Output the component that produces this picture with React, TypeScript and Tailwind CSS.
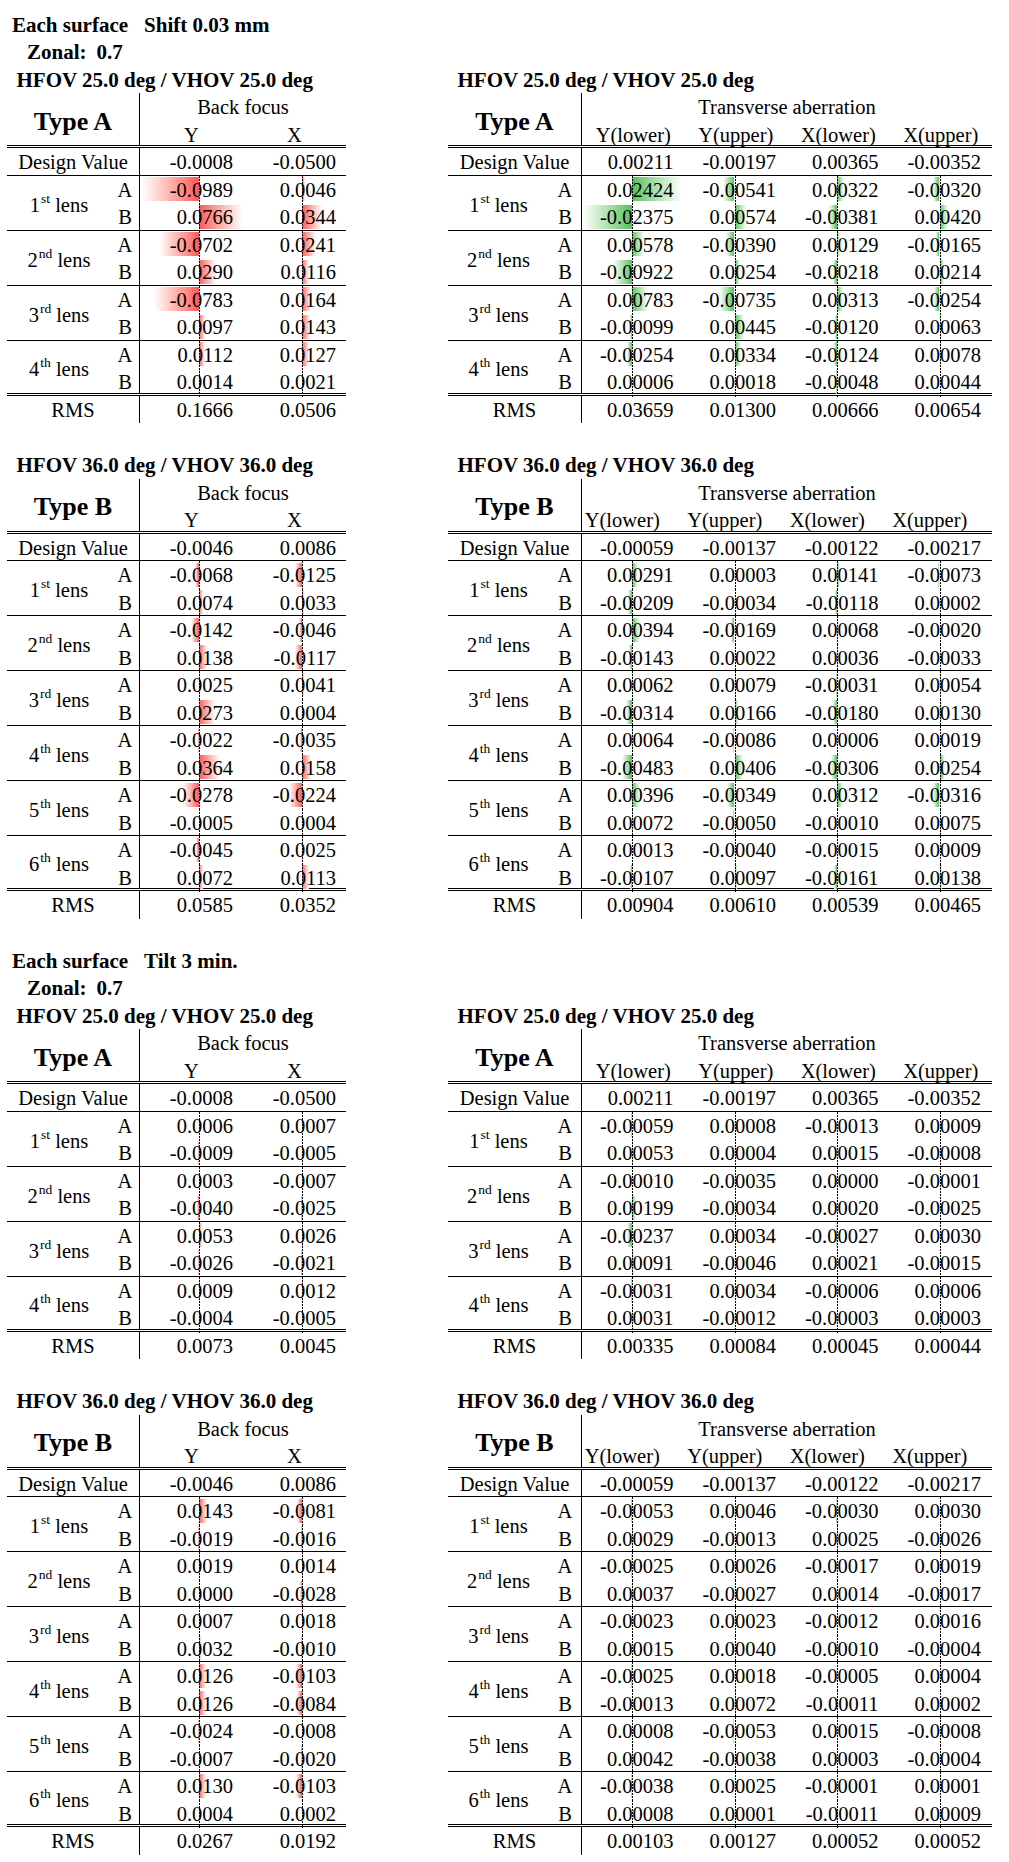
/**
 * Lens tolerance sheet — shift / tilt sensitivity tables.
 * Back focus (red data bars) on the left, transverse aberration (green) on the right.
 */
import React from "react";

type Kind = "bf" | "ta";

const ORD = ["st", "nd", "rd", "th", "th", "th"];

const KIND = {
  bf: {
    title: "Back focus",
    cols: ["Y", "X"],
    width: "w-[339px]",
    first: "w-[133px]",
    lens: "w-[104px]",
    ab: "w-[29px]",
    cell: "w-[103px]",
    axis: "left-[59px]",
    axisPx: 59,
    pad: "pr-[10px]",
    scale: 576,
    pos: "bg-linear-to-r from-[#ff555a] to-white",
    neg: "bg-linear-to-l from-[#ff555a] to-white",
  },
  ta: {
    title: "Transverse aberration",
    cols: ["Y(lower)", "Y(upper)", "X(lower)", "X(upper)"],
    width: "w-[544px]",
    first: "w-[134px]",
    lens: "w-[101px]",
    ab: "w-[33px]",
    cell: "w-[102.5px]",
    axis: "left-[50px]",
    axisPx: 50,
    pad: "pr-[11px]",
    scale: 2063,
    pos: "bg-linear-to-r from-[#52c15c] to-white",
    neg: "bg-linear-to-l from-[#52c15c] to-white",
  },
};

type KindCfg = (typeof KIND)["bf"];

const parse = (s: string) =>
  s
    .trim()
    .split("\n")
    .map((l) => l.trim().split(/\s+/));

// Sheet data: first line design value, then A/B per lens, last line RMS
const SECTIONS = [
  {
    label: "Shift 0.03 mm",
    tables: [
      {
        hfov: "25.0",
        type: "A",
        bf: `
          -0.0008 -0.0500
          -0.0989 0.0046
          0.0766 0.0344
          -0.0702 0.0241
          0.0290 0.0116
          -0.0783 0.0164
          0.0097 0.0143
          0.0112 0.0127
          0.0014 0.0021
          0.1666 0.0506`,
        ta: `
          0.00211 -0.00197 0.00365 -0.00352
          0.02424 -0.00541 0.00322 -0.00320
          -0.02375 0.00574 -0.00381 0.00420
          0.00578 -0.00390 0.00129 -0.00165
          -0.00922 0.00254 -0.00218 0.00214
          0.00783 -0.00735 0.00313 -0.00254
          -0.00099 0.00445 -0.00120 0.00063
          -0.00254 0.00334 -0.00124 0.00078
          0.00006 0.00018 -0.00048 0.00044
          0.03659 0.01300 0.00666 0.00654`,
      },
      {
        hfov: "36.0",
        type: "B",
        bf: `
          -0.0046 0.0086
          -0.0068 -0.0125
          0.0074 0.0033
          -0.0142 -0.0046
          0.0138 -0.0117
          0.0025 0.0041
          0.0273 0.0004
          -0.0022 -0.0035
          0.0364 0.0158
          -0.0278 -0.0224
          -0.0005 0.0004
          -0.0045 0.0025
          0.0072 0.0113
          0.0585 0.0352`,
        ta: `
          -0.00059 -0.00137 -0.00122 -0.00217
          0.00291 0.00003 0.00141 -0.00073
          -0.00209 -0.00034 -0.00118 0.00002
          0.00394 -0.00169 0.00068 -0.00020
          -0.00143 0.00022 0.00036 -0.00033
          0.00062 0.00079 -0.00031 0.00054
          -0.00314 0.00166 -0.00180 0.00130
          0.00064 -0.00086 0.00006 0.00019
          -0.00483 0.00406 -0.00306 0.00254
          0.00396 -0.00349 0.00312 -0.00316
          0.00072 -0.00050 -0.00010 0.00075
          0.00013 -0.00040 -0.00015 0.00009
          -0.00107 0.00097 -0.00161 0.00138
          0.00904 0.00610 0.00539 0.00465`,
      },
    ],
  },
  {
    label: "Tilt 3 min.",
    tables: [
      {
        hfov: "25.0",
        type: "A",
        bf: `
          -0.0008 -0.0500
          0.0006 0.0007
          -0.0009 -0.0005
          0.0003 -0.0007
          -0.0040 -0.0025
          0.0053 0.0026
          -0.0026 -0.0021
          0.0009 0.0012
          -0.0004 -0.0005
          0.0073 0.0045`,
        ta: `
          0.00211 -0.00197 0.00365 -0.00352
          -0.00059 0.00008 -0.00013 0.00009
          0.00053 0.00004 0.00015 -0.00008
          -0.00010 -0.00035 0.00000 -0.00001
          0.00199 -0.00034 0.00020 -0.00025
          -0.00237 0.00034 -0.00027 0.00030
          0.00091 -0.00046 0.00021 -0.00015
          -0.00031 0.00034 -0.00006 0.00006
          0.00031 -0.00012 -0.00003 0.00003
          0.00335 0.00084 0.00045 0.00044`,
      },
      {
        hfov: "36.0",
        type: "B",
        bf: `
          -0.0046 0.0086
          0.0143 -0.0081
          -0.0019 -0.0016
          0.0019 0.0014
          0.0000 -0.0028
          0.0007 0.0018
          0.0032 -0.0010
          0.0126 -0.0103
          0.0126 -0.0084
          -0.0024 -0.0008
          -0.0007 -0.0020
          0.0130 -0.0103
          0.0004 0.0002
          0.0267 0.0192`,
        ta: `
          -0.00059 -0.00137 -0.00122 -0.00217
          -0.00053 0.00046 -0.00030 0.00030
          0.00029 -0.00013 0.00025 -0.00026
          -0.00025 0.00026 -0.00017 0.00019
          0.00037 -0.00027 0.00014 -0.00017
          -0.00023 0.00023 -0.00012 0.00016
          0.00015 0.00040 -0.00010 -0.00004
          -0.00025 0.00018 -0.00005 0.00004
          -0.00013 0.00072 -0.00011 0.00002
          0.00008 -0.00053 0.00015 -0.00008
          0.00042 -0.00038 0.00003 -0.00004
          -0.00038 0.00025 -0.00001 0.00001
          0.00008 0.00001 -0.00011 0.00009
          0.00103 0.00127 0.00052 0.00052`,
      },
    ],
  },
];

function BarCell({ v, k }: { v: string; k: KindCfg }) {
  const n = parseFloat(v);
  const len = Math.abs(n) * k.scale;

  return (
    <div className={`relative h-[27.5px] pt-px text-right leading-[27.5px] ${k.pad}`}>
      {len > 0.3 && (
        <div
          className={`absolute top-[1.5px] bottom-[2px] ${n > 0 ? k.pos : k.neg}`}
          style={{ left: n > 0 ? k.axisPx : k.axisPx - len, width: len }}
        />
      )}
      <span className="relative">{v}</span>
      {/* eje discontinuo */}
      <div
        className={`absolute top-0 -bottom-px ${k.axis} w-px bg-[image:repeating-linear-gradient(to_bottom,#000_0_2px,transparent_2px_3px)]`}
      />
    </div>
  );
}

function DataTable({ kind, type, data }: { kind: Kind; type: string; data: string }) {
  const k = KIND[kind];
  const rows = parse(data);
  const design = rows[0];
  const rms = rows[rows.length - 1];
  const lensRows = rows.slice(1, -1);
  const groups: string[][][] = [];
  for (let i = 0; i < lensRows.length; i += 2) groups.push([lensRows[i], lensRows[i + 1]]);
  const shifted = kind === "ta" && type === "B";

  return (
    <div className={`${k.width} text-[20.5px]`}>
      {/* Encabezado */}
      <div className="flex h-[55px] border-b-[3px] border-double border-black">
        <div
          className={`${k.first} flex items-center justify-center border-r border-black pt-[5px] text-[26px] font-bold leading-[30px]`}
        >
          Type {type}
        </div>
        <div className="flex-1">
          <div className="h-[27.5px] pt-px text-center leading-[27.5px]">{k.title}</div>
          <div className="flex">
            {k.cols.map((c) => (
              <div
                key={c}
                className={`${k.cell} h-[27.5px] pt-px text-center leading-[27.5px] ${shifted ? "pr-[22px]" : ""}`}
              >
                {c}
              </div>
            ))}
          </div>
        </div>
      </div>

      {/* Design value */}
      <div className="flex h-[27.5px] border-b border-black leading-[27.5px]">
        <div className={`${k.first} border-r border-black pt-px text-center`}>Design Value</div>
        {design.map((v, i) => (
          <div key={i} className={`${k.cell} pt-px text-right ${k.pad}`}>
            {v}
          </div>
        ))}
      </div>

      {/* Lentes */}
      {groups.map((g, gi) => (
        <div
          key={gi}
          className={`flex h-[55px] ${
            gi === groups.length - 1
              ? "border-b-[3px] border-double border-black"
              : "border-b border-black"
          }`}
        >
          <div className={`${k.lens} flex items-center justify-center pt-[6px] leading-[27.5px]`}>
            <span>
              {gi + 1}
              <sup className="ml-px -top-[9px] text-[13.5px]">{ORD[gi]}</sup> lens
            </span>
          </div>
          <div className={`${k.ab} border-r border-black`}>
            {["A", "B"].map((ab) => (
              <div key={ab} className="h-[27.5px] pt-px text-center leading-[27.5px]">
                {ab}
              </div>
            ))}
          </div>
          {g[0].map((_, ci) => (
            <div key={ci} className={k.cell}>
              <BarCell v={g[0][ci]} k={k} />
              <BarCell v={g[1][ci]} k={k} />
            </div>
          ))}
        </div>
      ))}

      {/* RMS */}
      <div className="flex h-[27.5px] leading-[27.5px]">
        <div className={`${k.first} border-r border-black pt-px text-center`}>RMS</div>
        {rms.map((v, i) => (
          <div key={i} className={`${k.cell} pt-px text-right ${k.pad}`}>
            {v}
          </div>
        ))}
      </div>
    </div>
  );
}

function Title({ children }: { children: React.ReactNode }) {
  return (
    <div className="h-[27.5px] pl-[9.5px] pt-px text-[21px] font-bold leading-[27.5px]">{children}</div>
  );
}

export default function App() {
  return (
    <div className="min-h-screen w-[1009px] bg-white pt-[10.5px] font-['Liberation_Serif',serif] text-black">
      {SECTIONS.map((s, si) => (
        <section key={s.label} className={si > 0 ? "mt-[28px]" : ""}>
          <div className="flex h-[27.5px] pl-[12px] pt-px text-[21px] font-bold leading-[27.5px]">
            <span>Each surface</span>
            <span className="ml-[16px]">{s.label}</span>
          </div>
          <div className="flex h-[27.5px] pl-[27px] pt-px text-[21px] font-bold leading-[27.5px]">
            <span>Zonal:</span>
            <span className="ml-[10px]">0.7</span>
          </div>

          {s.tables.map((t, ti) => (
            <div key={t.type} className={`flex ${ti > 0 ? "mt-[28px]" : ""}`}>
              <div className="ml-[7px]">
                <Title>
                  HFOV {t.hfov} deg / VHOV {t.hfov} deg
                </Title>
                <DataTable kind="bf" type={t.type} data={t.bf} />
              </div>
              <div className="ml-[102px]">
                <Title>
                  HFOV {t.hfov} deg / VHOV {t.hfov} deg
                </Title>
                <DataTable kind="ta" type={t.type} data={t.ta} />
              </div>
            </div>
          ))}
        </section>
      ))}
    </div>
  );
}
